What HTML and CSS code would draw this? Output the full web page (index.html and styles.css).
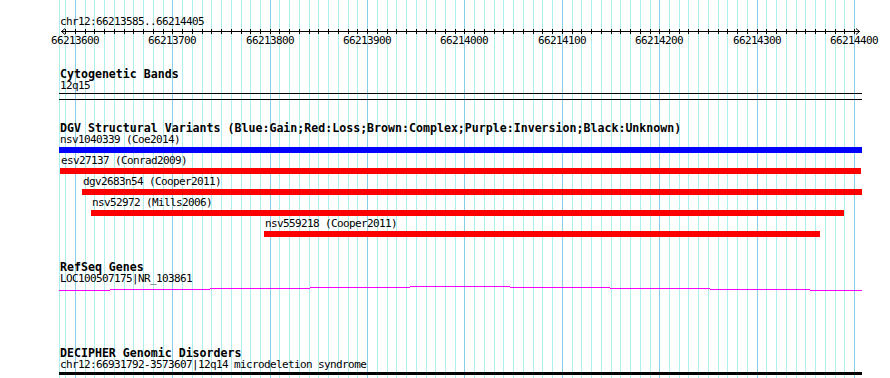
FILE: index.html
```html
<!DOCTYPE html>
<html>
<head>
  <meta charset="utf-8">
  <link rel="stylesheet" href="styles.css">
</head>
<body>
  <div class="panel">
    <svg class="grid" width="890" height="378">
      <path class="grid-minor" d="M59.5 0v378M65.5 0v378M85.5 0v378M94.5 0v378M104.5 0v378M114.5 0v378M124.5 0v378M133.5 0v378M143.5 0v378M153.5 0v378M163.5 0v378M182.5 0v378M192.5 0v378M202.5 0v378M211.5 0v378M221.5 0v378M231.5 0v378M241.5 0v378M250.5 0v378M260.5 0v378M279.5 0v378M289.5 0v378M299.5 0v378M309.5 0v378M318.5 0v378M328.5 0v378M338.5 0v378M348.5 0v378M357.5 0v378M377.5 0v378M387.5 0v378M396.5 0v378M406.5 0v378M416.5 0v378M426.5 0v378M435.5 0v378M445.5 0v378M455.5 0v378M474.5 0v378M484.5 0v378M494.5 0v378M503.5 0v378M513.5 0v378M523.5 0v378M533.5 0v378M542.5 0v378M552.5 0v378M572.5 0v378M581.5 0v378M591.5 0v378M601.5 0v378M611.5 0v378M620.5 0v378M630.5 0v378M640.5 0v378M650.5 0v378M669.5 0v378M679.5 0v378M688.5 0v378M698.5 0v378M708.5 0v378M718.5 0v378M727.5 0v378M737.5 0v378M747.5 0v378M766.5 0v378M776.5 0v378M786.5 0v378M796.5 0v378M805.5 0v378M815.5 0v378M825.5 0v378M835.5 0v378M844.5 0v378"/>
      <path class="grid-major" d="M75.5 0v378M172.5 0v378M270.5 0v378M367.5 0v378M464.5 0v378M562.5 0v378M659.5 0v378M757.5 0v378M854.5 0v378"/>
    </svg>

    <div class="tracks">
      <div class="ruler">
        <div class="label ruler-title">chr12:66213585..66214405</div>
        <svg class="scale" width="890" height="18">
          <path class="axis" d="M61 3.5H860M65 0.5L61.5 3.5L65 6.5M856 0.5L859.5 3.5L856 6.5"/>
          <path class="axis" d="M65.5 1v5M75.5 1v5M85.5 1v5M94.5 1v5M104.5 1v5M114.5 1v5M124.5 1v5M133.5 1v5M143.5 1v5M153.5 1v5M163.5 1v5M172.5 1v5M182.5 1v5M192.5 1v5M202.5 1v5M211.5 1v5M221.5 1v5M231.5 1v5M241.5 1v5M250.5 1v5M260.5 1v5M270.5 1v5M279.5 1v5M289.5 1v5M299.5 1v5M309.5 1v5M318.5 1v5M328.5 1v5M338.5 1v5M348.5 1v5M357.5 1v5M367.5 1v5M377.5 1v5M387.5 1v5M396.5 1v5M406.5 1v5M416.5 1v5M426.5 1v5M435.5 1v5M445.5 1v5M455.5 1v5M464.5 1v5M474.5 1v5M484.5 1v5M494.5 1v5M503.5 1v5M513.5 1v5M523.5 1v5M533.5 1v5M542.5 1v5M552.5 1v5M562.5 1v5M572.5 1v5M581.5 1v5M591.5 1v5M601.5 1v5M611.5 1v5M620.5 1v5M630.5 1v5M640.5 1v5M650.5 1v5M659.5 1v5M669.5 1v5M679.5 1v5M688.5 1v5M698.5 1v5M708.5 1v5M718.5 1v5M727.5 1v5M737.5 1v5M747.5 1v5M757.5 1v5M766.5 1v5M776.5 1v5M786.5 1v5M796.5 1v5M805.5 1v5M815.5 1v5M825.5 1v5M835.5 1v5M844.5 1v5M854.5 1v5"/>
          <text class="tick-label" x="75" y="16">66213600</text>
          <text class="tick-label" x="172" y="16">66213700</text>
          <text class="tick-label" x="270" y="16">66213800</text>
          <text class="tick-label" x="367" y="16">66213900</text>
          <text class="tick-label" x="464" y="16">66214000</text>
          <text class="tick-label" x="562" y="16">66214100</text>
          <text class="tick-label" x="659" y="16">66214200</text>
          <text class="tick-label" x="757" y="16">66214300</text>
          <text class="tick-label" x="854" y="16">66214400</text>
        </svg>
      </div>

      <div class="track">
        <div class="track-title">Cytogenetic Bands</div>
        <div class="label indent">12q15</div>
        <div class="band"></div>
      </div>

      <div class="track">
        <div class="track-title">DGV Structural Variants (Blue:Gain;Red:Loss;Brown:Complex;Purple:Inversion;Black:Unknown)</div>
        <div class="feature" style="margin-left:59px">
          <div class="label">nsv1040339 (Coe2014)</div>
          <div class="bar gain" style="width:803px"></div>
        </div>
        <div class="feature" style="margin-left:60px">
          <div class="label">esv27137 (Conrad2009)</div>
          <div class="bar loss" style="width:801px"></div>
        </div>
        <div class="feature" style="margin-left:82px">
          <div class="label">dgv2683n54 (Cooper2011)</div>
          <div class="bar loss" style="width:780px"></div>
        </div>
        <div class="feature" style="margin-left:91px">
          <div class="label">nsv52972 (Mills2006)</div>
          <div class="bar loss" style="width:753px"></div>
        </div>
        <div class="feature" style="margin-left:264px">
          <div class="label">nsv559218 (Cooper2011)</div>
          <div class="bar loss" style="width:556px"></div>
        </div>
      </div>

      <div class="track refseq">
        <div class="track-title">RefSeq Genes</div>
        <div class="label indent">LOC100507175|NR_103861</div>
        <svg class="gene" width="890" height="7">
          <rect x="59" y="5" width="51" height="1"/>
          <rect x="110" y="4" width="100" height="1"/>
          <rect x="210" y="3" width="100" height="1"/>
          <rect x="310" y="2" width="100" height="1"/>
          <rect x="410" y="1" width="100" height="1"/>
          <rect x="510" y="2" width="100" height="1"/>
          <rect x="610" y="3" width="100" height="1"/>
          <rect x="710" y="4" width="100" height="1"/>
          <rect x="810" y="5" width="52" height="1"/>
        </svg>
      </div>

      <div class="track">
        <div class="track-title">DECIPHER Genomic Disorders</div>
        <div class="label indent">chr12:66931792-3573607|12q14 microdeletion syndrome</div>
        <div class="disorder"></div>
      </div>
    </div>
  </div>
</body>
</html>
```

FILE: styles.css
```css
* {
  margin: 0;
  padding: 0;
  box-sizing: border-box;
}

body {
  width: 890px;
  height: 378px;
  background: #ffffff;
  color: #000000;
  font-family: 'DejaVu Sans Mono', 'Liberation Mono', monospace;
  overflow: hidden;
}

.panel {
  position: relative;
  width: 890px;
  height: 378px;
}

.grid {
  position: absolute;
  top: 0;
  left: 0;
  display: block;
}

.grid-minor {
  stroke: #afeeee;
  stroke-width: 1;
  fill: none;
}

.grid-major {
  stroke: #87ceeb;
  stroke-width: 1;
  fill: none;
}

.tracks {
  position: relative;
  display: flex;
  flex-direction: column;
}

.label {
  font-size: 11px;
  line-height: 12px;
  letter-spacing: -0.62px;
  white-space: nowrap;
}

.ruler-title {
  margin-top: 16px;
  padding-left: 60px;
}

.scale {
  display: block;
}

.axis {
  stroke: #000000;
  stroke-width: 1;
  fill: none;
}

.tick-label {
  font-family: 'DejaVu Sans Mono', 'Liberation Mono', monospace;
  font-size: 11px;
  letter-spacing: -0.62px;
  text-anchor: middle;
  fill: #000000;
}

.track {
  margin-top: 22px;
  display: flex;
  flex-direction: column;
}

.refseq {
  padding-bottom: 33px;
}

.track-title {
  padding-left: 60px;
  font-size: 11.6px;
  font-weight: bold;
  line-height: 12px;
  white-space: nowrap;
}

.indent {
  padding-left: 60px;
}

.band {
  margin-top: 1px;
  margin-left: 59px;
  width: 803px;
  height: 7px;
  border-top: 1px solid #000000;
  border-bottom: 1px solid #000000;
}

.feature {
  display: flex;
  flex-direction: column;
  margin-bottom: 2px;
}

.feature .label {
  padding-left: 1px;
}

.bar {
  margin-top: 1px;
  height: 6px;
}

.gain {
  background: #0000ff;
}

.loss {
  background: #ff0000;
}

.gene {
  display: block;
  fill: #ff00ff;
}

.disorder {
  margin-top: 1px;
  margin-left: 59px;
  width: 803px;
  height: 3px;
  background: #000000;
}
```
